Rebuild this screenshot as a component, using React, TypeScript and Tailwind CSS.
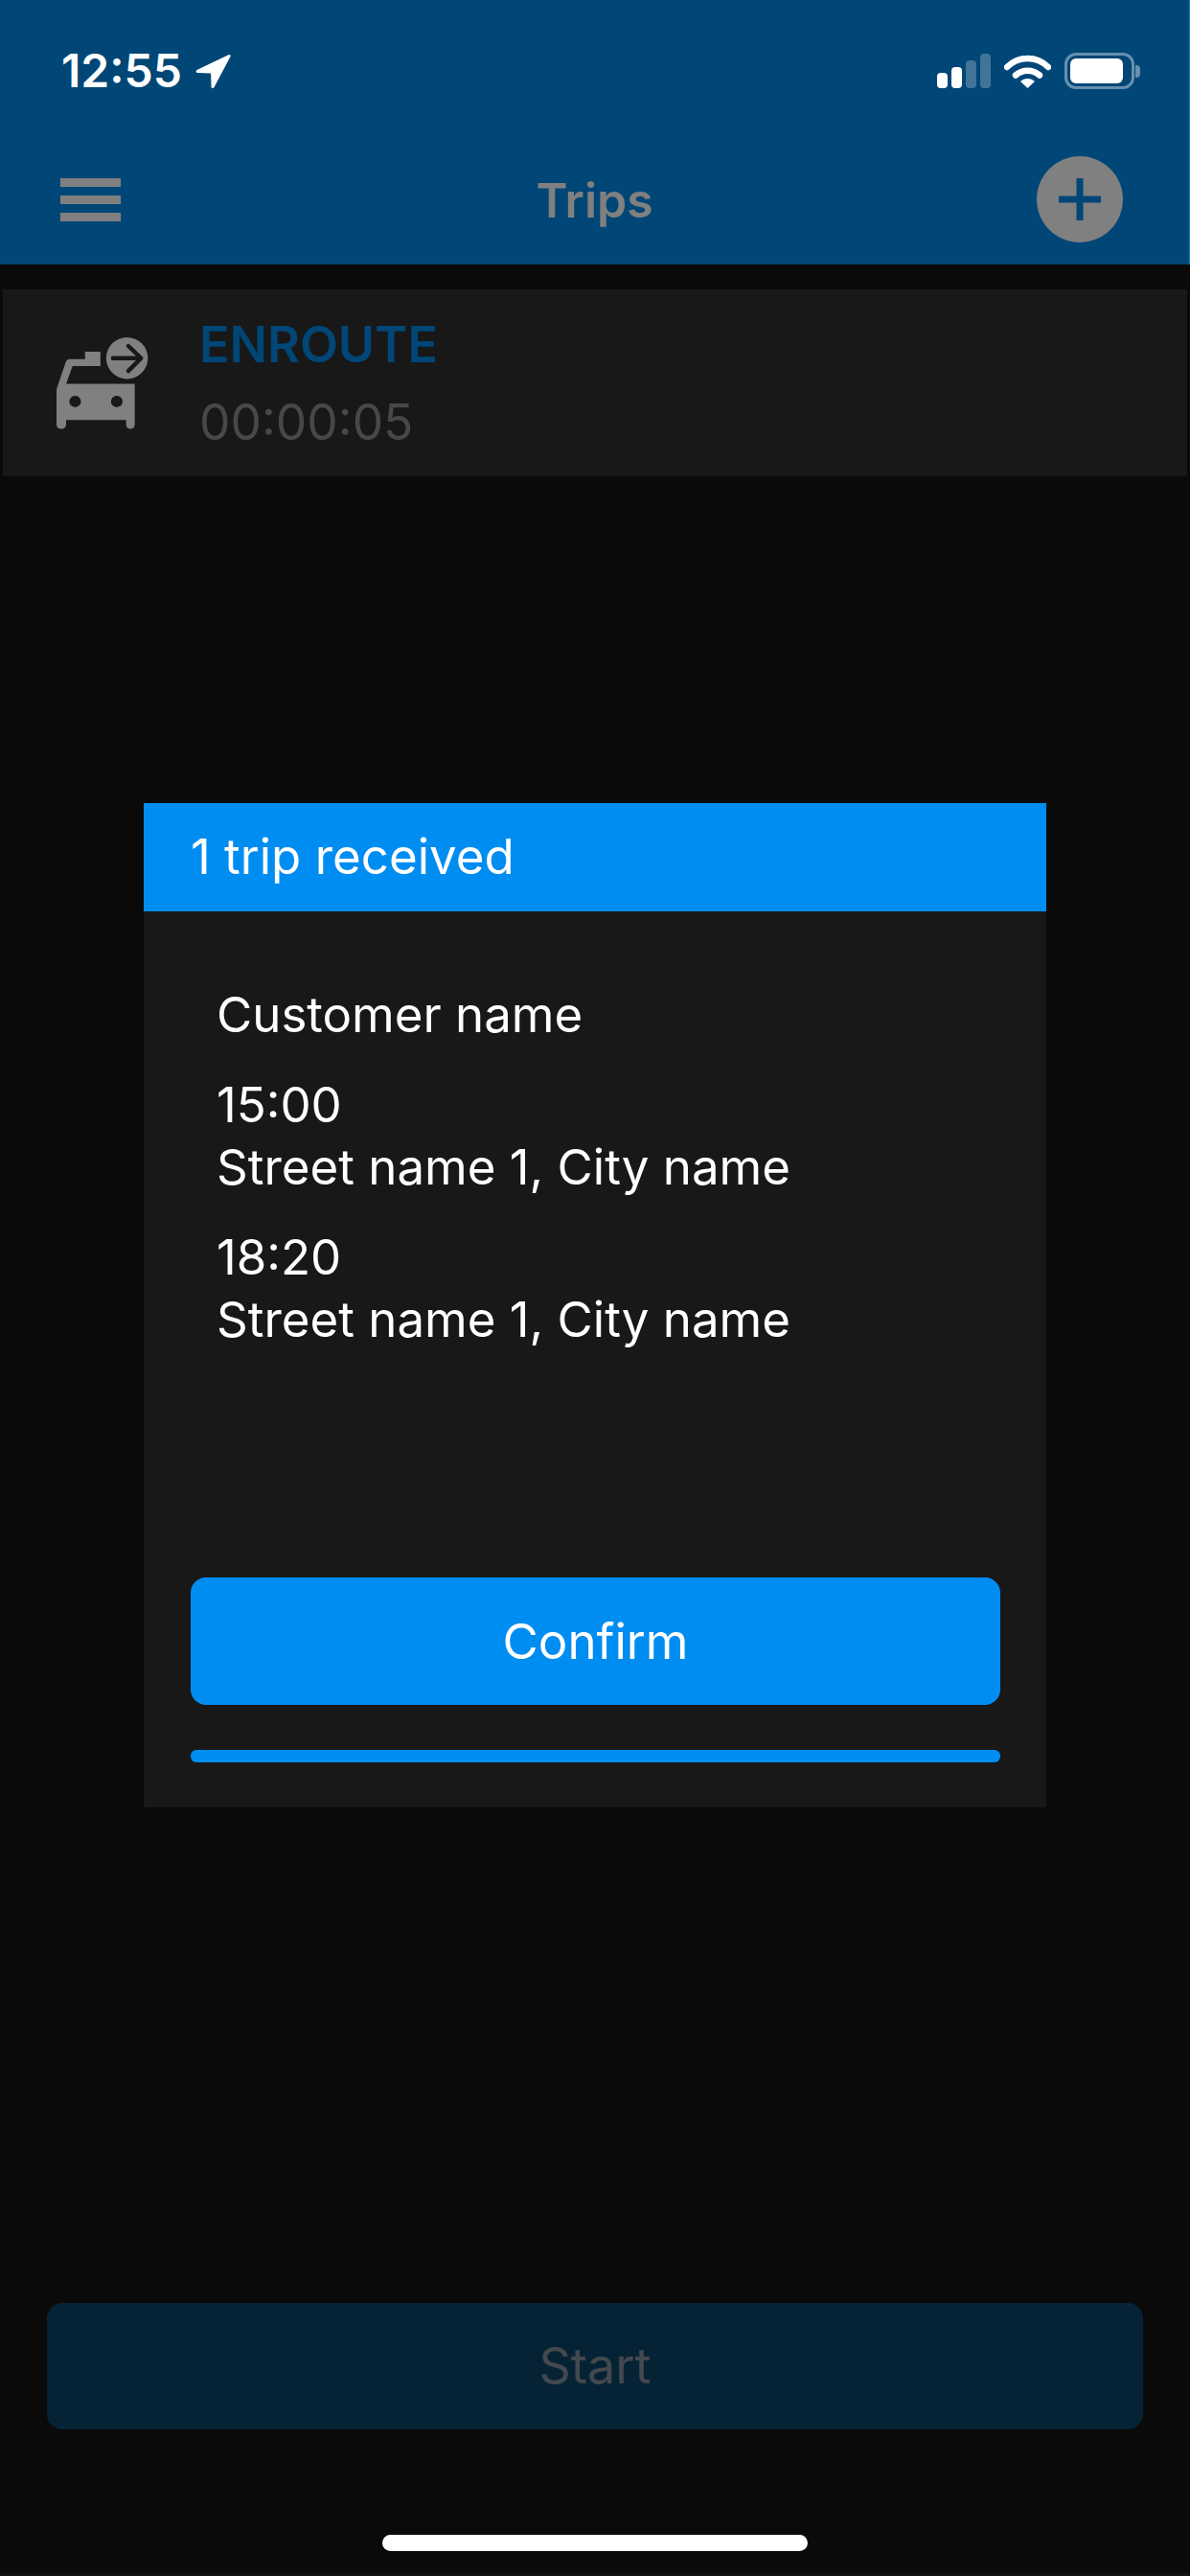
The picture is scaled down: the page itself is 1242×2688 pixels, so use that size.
const sans = "font-['Inter','Noto_Sans',sans-serif]";

function StatusBar() {
  return (
    <div className="mt-[55px] flex h-[38px] items-center justify-between pl-[64px] pr-[51px]">
      <div className="flex items-center">
        <span className="font-['Inter',sans-serif] text-[48px] leading-[38px] font-semibold text-white">12:55</span>
        <svg className="ml-[14px] h-[37px] w-[37px]" viewBox="0 0 37 37">
          <path d="M35 1 1.500 17c-1.500.8-1 3 .6 3l14 .4.4 14c0 1.700 2.300 2.200 3 .6L36.500 3c.5-1.200-.4-2.500-1.500-2z" fill="#fff" />
        </svg>
      </div>
      <div className="flex items-center">
        <svg className="h-[36px] w-[56px]" viewBox="0 0 56 36">
          <rect x="0" y="20" width="11" height="16" rx="4" fill="#fff" />
          <rect x="15" y="14" width="11" height="22" rx="4" fill="#fff" />
          <rect x="30" y="7" width="11" height="29" rx="4" fill="#fff" fillOpacity="0.25" />
          <rect x="45" y="0" width="11" height="36" rx="4" fill="#fff" fillOpacity="0.25" />
        </svg>
        <svg className="ml-[14px] h-[38px] w-[49px]" viewBox="0 0 49 38">
          <path d="M3 15C15 3 34 3 46 15" fill="none" stroke="#fff" strokeWidth="6.500" strokeLinecap="round" />
          <path d="M12 23.500C19 17 30 17 37 23.500" fill="none" stroke="#fff" strokeWidth="6.500" strokeLinecap="round" />
          <path d="M24.500 37 17 30c4-4 11-4 15 0z" fill="#fff" />
        </svg>
        <div className="ml-[14px] flex items-center">
          <div className="flex h-[38px] w-[73px] items-center rounded-[12px] border-[3px] border-white/40 px-[3px]">
            <div className="h-[26px] w-[55px] rounded-[6px] bg-white" />
          </div>
          <div className="ml-[1px] h-[13px] w-[5px] rounded-r-[4px] bg-white/40" />
        </div>
      </div>
    </div>
  );
}

function NavBar() {
  return (
    <div className="mt-[70px] flex h-[90px] items-center pl-[63px] pr-[69px]">
      <div className="flex-1">
        <div className="flex w-[63px] flex-col gap-[9px]">
          <div className="h-[9px] bg-[#808080]" />
          <div className="h-[9px] bg-[#808080]" />
          <div className="h-[9px] bg-[#808080]" />
        </div>
      </div>
      <span className={`${sans} mt-[2px] ml-[6px] text-[50px] font-semibold text-[#808080]`}>Trips</span>
      <div className="flex flex-1 justify-end">
        <div className="relative h-[90px] w-[90px] rounded-full bg-[#808080]">
          <svg className="absolute top-[23px] left-[23px] h-[44px] w-[44px]" viewBox="0 0 44 44">
            <path d="M22 0v44M0 22h44" stroke="#004677" strokeWidth="7" />
          </svg>
        </div>
      </div>
    </div>
  );
}

function TaxiIcon() {
  return (
    <svg className="h-[96px] w-[96px] shrink-0" viewBox="88 60 287 287">
      <path
        fillRule="evenodd"
        fill="#808080"
        d="M88 222 115 142C118 132 122 128 132 128H177V105H225V150H138L118 205H332V332C332 350 305 350 305 332V318H118V332C118 350 88 350 88 332ZM146 242a18 18 0 1 0 .01 0ZM276 242a18 18 0 1 0 .01 0Z"
      />
      <circle cx="308" cy="125" r="72" fill="#181818" />
      <circle cx="308" cy="125" r="65" fill="#808080" />
      <path d="M264 125H350M312 87l40 38-40 40" fill="none" stroke="#181818" strokeWidth="13" strokeLinecap="round" strokeLinejoin="round" />
    </svg>
  );
}

function TripRow() {
  return (
    <div className="mx-[3px] mt-[26px] flex h-[195px] items-center bg-[#181818] pl-[56px]">
      <TaxiIcon />
      <div className="ml-[53px] flex flex-col">
        <span className={`${sans} text-[52px] leading-[60px] font-semibold text-[#004677]`}>ENROUTE</span>
        <span className={`${sans} mt-[20px] text-[51.500px] leading-[60px] text-[#484848]`}>00:00:05</span>
      </div>
    </div>
  );
}

function TripDialog() {
  return (
    <div className="mx-auto mt-[341px] flex h-[1048px] w-[942px] flex-col bg-[#181818]">
      <div className={`${sans} flex h-[113px] items-center bg-[#008df2] pl-[49px] text-[51px] text-white`}>1 trip received</div>
      <div className={`${sans} flex flex-1 flex-col pl-[49px] pr-[48px] text-[51px] leading-[65px] text-white`}>
        <div className="mt-[75px] pl-[27px]">
          <p>Customer name</p>
          <p className="mt-[29px]">15:00</p>
          <p>Street name 1, City name</p>
          <p className="mt-[29px]">18:20</p>
          <p>Street name 1, City name</p>
        </div>
        <div className="mt-auto flex h-[133px] items-center justify-center rounded-[16px] bg-[#008df2]">Confirm</div>
        <div className="mt-[47px] mb-[47px] h-[13px] rounded-[6px] bg-[#008df2]" />
      </div>
    </div>
  );
}

export default function App() {
  return (
    <div className="flex h-[2688px] w-[1242px] flex-col overflow-hidden bg-[#0a0a0a]">
      <header className="h-[276px] shrink-0 border-r border-[#0a7fd0] bg-[#004677]">
        <StatusBar />
        <NavBar />
      </header>
      <TripRow />
      <TripDialog />
      <div className={`${sans} mx-[49px] mt-auto flex h-[132px] items-center justify-center rounded-[16px] bg-[#062335] text-[52px] text-[#43494e]`}>Start</div>
      <div className="mx-auto mt-[110px] mb-[23px] h-[17px] w-[444px] rounded-full bg-white" />
      <div className="h-[3px] bg-[#131313]" />
    </div>
  );
}
